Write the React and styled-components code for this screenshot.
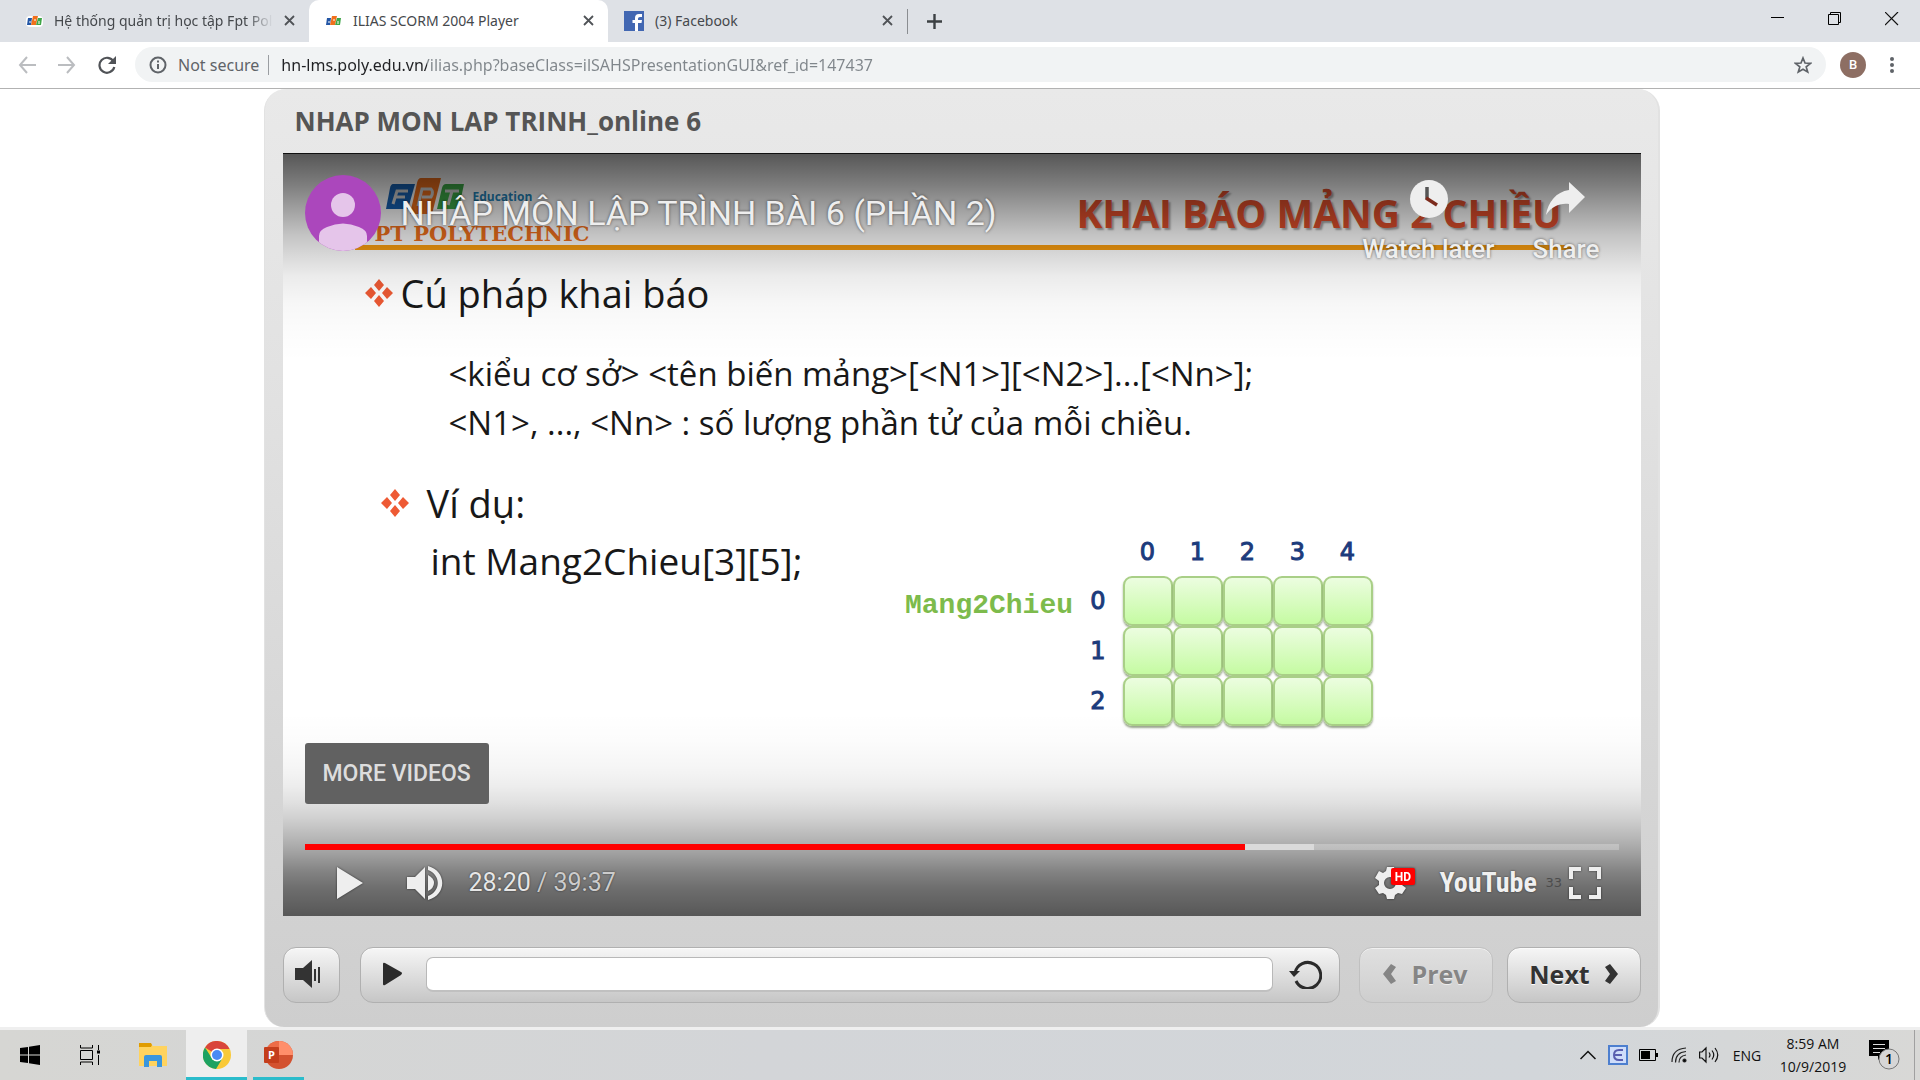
import React from "react";
import styled, { createGlobalStyle } from "styled-components";

const ui = '"Open Sans", "Noto Sans", sans-serif';
const system = '"Noto Sans", "Open Sans", sans-serif';
const yt = 'Roboto, "Liberation Sans", sans-serif';

const GlobalStyle = createGlobalStyle`
  *, *::before, *::after { box-sizing: border-box; }
  html, body { margin: 0; padding: 0; }
  body { background: #fff; font-family: ${ui}; color: #222; }
  button { font: inherit; color: inherit; border: 0; padding: 0; background: none; cursor: pointer; }
  svg { display: block; flex: none; }
`;

const Screen = styled.div`
  min-height: 100vh;
  display: flex;
  flex-direction: column;
`;

/* ---------- browser chrome ---------- */

const TabStrip = styled.header`
  display: flex;
  height: 42px;
  padding-left: 10px;
  background: #dee1e6;
  font-family: ${system};
`;

const Tab = styled.div`
  display: flex;
  align-items: center;
  width: 299px;
  padding: 0 14px 1px 16px;
  gap: 11px;
  color: #45484c;
  font-size: 14px;
  line-height: 20px;
  background: ${(p) => (p.$active ? "#fff" : "transparent")};
  border-radius: 10px 10px 0 0;
`;

const TabTitle = styled.span`
  flex: 1;
  min-width: 0;
  overflow: hidden;
  white-space: nowrap;
  mask-image: ${(p) => (p.$fade ? "linear-gradient(90deg, #000 88%, transparent)" : "none")};
`;

const TabDivider = styled.span`
  width: 1px;
  height: 25px;
  margin-top: 9px;
  background: #8a8d91;
`;

const NewTab = styled.button`
  display: flex;
  align-items: center;
  padding: 0 20px 0 19px;
`;

const WindowButtons = styled.div`
  display: flex;
  margin-left: auto;
`;

const WindowButton = styled.button`
  display: grid;
  place-items: center;
  width: 57px;
  height: 37px;
`;

const Toolbar = styled.nav`
  display: flex;
  align-items: center;
  height: 47px;
  padding: 0 18px 1px;
  border-bottom: 1px solid #b2b2b2;
  background: #fff;
`;

const NavButton = styled.button`
  display: grid;
  width: 40px;
`;

const Omnibox = styled.div`
  display: flex;
  flex: 1;
  align-items: center;
  height: 35px;
  margin: 0 14px 0 -3px;
  padding: 0 14px;
  border-radius: 18px;
  background: #f1f3f4;
  color: #5f6368;
  font: 16px/24px ${system};
`;

const Security = styled.span`
  padding: 0 9px 0 11px;
  white-space: nowrap;
`;

const SecurityDivider = styled.span`
  width: 1px;
  height: 20px;
  margin-right: 12px;
  background: #9a9da1;
`;

const Address = styled.input`
  flex: 1;
  min-width: 0;
  padding: 0;
  border: 0;
  outline: 0;
  font: 16px/24px ${system};
  color: #80868b;
  -webkit-text-fill-color: transparent;
  background: linear-gradient(90deg, #202124 146px, #80868b 146px);
  -webkit-background-clip: text;
  background-clip: text;
`;

const Profile = styled.button`
  display: grid;
  place-items: center;
  width: 26px;
  height: 26px;
  border-radius: 50%;
  background: #8d6e63;
  color: #fff;
  font: 500 13px/26px ${yt};
`;

const MenuButton = styled.button`
  display: grid;
  place-items: center;
  width: 20px;
  margin: 0 0 0 16px;
`;

/* ---------- course player ---------- */

const Page = styled.main`
  flex: 1;
  padding-left: 3px;
`;

const Player = styled.section`
  max-width: 1396px;
  margin: 0 auto;
  padding: 0 17px 24px 18px;
  border: solid #e2e2e2;
  border-width: 0 2px 0 1px;
  border-radius: 22px 22px 20px 20px;
  background: linear-gradient(#e9e9e9, #e2e2e2 30%, #cecece);
`;

const CourseTitle = styled.h1`
  margin: 0;
  padding: 12px;
  color: #555;
  font-size: 26px;
  line-height: 40px;
  font-weight: 700;
`;

const Video = styled.div`
  display: grid;
  border-top: 1px solid #111;
  background: #fff;
  min-height: 763px;
  > * { grid-area: 1 / 1; min-width: 0; }
`;

const Slide = styled.article`
  color: #181818;
`;

const SlideHeader = styled.header`
  display: flex;
  align-items: flex-end;
  justify-content: space-between;
  height: 96px;
  margin: 0 68px 0 72px;
  padding: 0 11px 0 5px;
  border-bottom: 5px solid #f99d10;
`;

const Brand = styled.div`
  display: flex;
  flex-direction: column;
  gap: 8px;
`;

const BrandTop = styled.div`
  display: flex;
  align-items: center;
  gap: 9px;
  padding-left: 26px;
  color: #2486bd;
  font-size: 12px;
  font-weight: 700;
`;

const BrandName = styled.div`
  color: #f0701c;
  font: 700 21px/22px "DejaVu Serif", serif;
`;

const SlideTitle = styled.h2`
  margin: 0;
  padding-bottom: 8px;
  color: #e04f2c;
  font-size: 39px;
  line-height: 48px;
  font-weight: 700;
  text-shadow: 2px 2px 2px rgba(0, 0, 0, 0.35);
`;

const Heading = styled.h3`
  display: flex;
  align-items: center;
  gap: ${(p) => p.$gap}px;
  margin: 0;
  font-size: 38px;
  line-height: 48px;
  font-weight: 400;
`;

const Intro = styled.div`
  padding: 19px 0 32px 82px;
`;

const Syntax = styled.p`
  margin: 0;
  padding-left: 166px;
  font-size: 33px;
  line-height: 49px;
`;

const Example = styled.div`
  display: flex;
  justify-content: space-between;
  padding: 32px 268px 0 98px;
`;

const Code = styled.p`
  margin: 10px 0 0 50px;
  font-size: 37px;
  line-height: 48px;
`;

const ArrayTable = styled.table`
  margin-top: 49px;
  border-collapse: collapse;
  color: #1c3b7c;
  font: 24px/28px "DejaVu Sans", sans-serif;
  -webkit-text-stroke: 1px currentColor;
  th, td { padding: 0; font-weight: 400; text-align: center; }
  thead th { height: 48px; }
  tbody th { width: 49px; }
`;

const ArrayName = styled.th`
  && {
    width: 169px;
    color: #7dbb4c;
    font: 700 28px/32px "Liberation Mono", monospace;
    -webkit-text-stroke: 0;
    padding-top: 10px;
  }
`;

const Cell = styled.td`
  width: 50px;
  height: 50px;
  > span {
    display: block;
    height: 50px;
    border: 2px solid #a9cf87;
    border-radius: 9px;
    background: linear-gradient(#ecfde0, #c5fba2);
    box-shadow: 0 2px 2px rgba(90, 110, 70, 0.6);
  }
`;

const Chrome = styled.div`
  display: flex;
  flex-direction: column;
  justify-content: space-between;
  color: #eee;
  font-family: ${yt};
  background:
    linear-gradient(
      rgba(0, 0, 0, 0.66) 0, rgba(0, 0, 0, 0.6) 12px, rgba(0, 0, 0, 0.5) 32px,
      rgba(0, 0, 0, 0.37) 56px, rgba(0, 0, 0, 0.24) 80px, rgba(0, 0, 0, 0.15) 102px,
      rgba(0, 0, 0, 0.08) 122px, rgba(0, 0, 0, 0.03) 150px, rgba(0, 0, 0, 0.01) 180px, transparent 208px
    ) top / 100% 208px no-repeat,
    linear-gradient(
      to top,
      rgba(0, 0, 0, 0.66) 0, rgba(0, 0, 0, 0.57) 28px, rgba(0, 0, 0, 0.49) 44px,
      rgba(0, 0, 0, 0.37) 63px, rgba(0, 0, 0, 0.29) 77px, rgba(0, 0, 0, 0.19) 97px,
      rgba(0, 0, 0, 0.12) 113px, rgba(0, 0, 0, 0.07) 130px, rgba(0, 0, 0, 0.04) 148px,
      rgba(0, 0, 0, 0.01) 176px, transparent 204px
    ) bottom / 100% 204px no-repeat;
`;

const TopBar = styled.div`
  display: flex;
  gap: 20px;
  padding: 21px 41px 0 22px;
`;

const VideoTitle = styled.a`
  flex: 1;
  padding-top: 14px;
  color: #eee;
  font-size: 34px;
  line-height: 48px;
  text-decoration: none;
  white-space: nowrap;
  text-shadow: 0 0 3px rgba(0, 0, 0, 0.6);
`;

const Actions = styled.div`
  display: flex;
  align-items: flex-start;
  gap: 38px;
  padding-top: 4px;
`;

const Action = styled.button`
  && {
    display: flex;
    flex-direction: column;
    align-items: center;
    gap: 19px;
    font-size: 26px;
    line-height: 24px;
    font-weight: 500;
    text-shadow: 0 0 3px rgba(0, 0, 0, 0.6);
  }
`;

const MoreVideos = styled.button`
  && {
    height: 61px;
    margin: 0 22px 40px;
    padding: 0 18px;
    border-radius: 3px;
    background: #616161;
    color: #ddd;
    font-size: 23px;
    font-weight: 500;
  }
`;

const Scrubber = styled.input`
  display: block;
  appearance: none;
  width: calc(100% - 44px);
  height: 6px;
  margin: 0 22px;
  border: 0;
  background: linear-gradient(90deg, #f00 71.5%, #dadada 71.5%, #dadada 76.8%, rgba(255, 255, 255, 0.25) 76.8%);
  &::-webkit-slider-thumb { appearance: none; width: 0; height: 0; }
`;

const VideoControls = styled.div`
  display: flex;
  align-items: center;
  height: 66px;
  padding: 0 40px 0 54px;
`;

const Time = styled.div`
  flex: 1;
  margin-left: 26px;
  color: #ccc;
  font-size: 25px;
  line-height: 28px;
  text-shadow: 0 0 2px rgba(0, 0, 0, 0.6);
  b { color: #e6e6e6; font-weight: 400; }
`;

const IconButton = styled.button`
  margin-left: ${(p) => p.$gap || 0}px;
  filter: ${(p) => (p.$flat ? "none" : "drop-shadow(0 0 1px rgba(0, 0, 0, 0.6))")};
`;

const YouTubeLink = styled.a`
  margin-left: 25px;
  width: 98px;
  color: #f0f0f0;
  font: 700 28px/32px "Roboto Condensed", "Liberation Sans Narrow", "Liberation Sans", sans-serif;
  text-decoration: none;
  text-shadow: 0 0 2px rgba(0, 0, 0, 0.6);
`;

const PageNumber = styled.span`
  margin-left: 8px;
  width: 16px;
  color: #4c4c4c;
  font: 13px/16px "DejaVu Sans", sans-serif;
`;

const Controls = styled.div`
  display: flex;
  align-items: center;
  padding-top: 31px;
`;

const raised = `
  display: flex;
  align-items: center;
  height: 56px;
  border: 1px solid #b0b0b0;
  border-radius: 13px;
  background: linear-gradient(#f6f6f6, #c6c6c6);
  box-shadow: inset 0 1px #fff8;
`;

const SquareButton = styled.button`
  && { ${raised} width: 57px; padding: 0 0 2px 11px; }
`;

const SeekPanel = styled.div`
  ${raised}
  flex: 1;
  margin: 0 19px 0 20px;
  padding: 0 17px 2px 21px;
`;

const Seek = styled.input`
  appearance: none;
  flex: 1;
  min-width: 0;
  height: 35px;
  margin: 0 16px 0 23px;
  border: 1px solid #b8b8b8;
  border-bottom: 2px solid #c0c0c0;
  border-radius: 7px;
  background: #fff;
  &::-webkit-slider-thumb { appearance: none; width: 0; height: 0; }
`;

const StepButton = styled.button`
  && {
    ${raised}
    justify-content: center;
    gap: 15px;
    width: 134px;
    padding-bottom: 3px;
    margin-right: ${(p) => p.$gap || 0}px;
    color: #333;
    font-size: 25px;
    line-height: 32px;
    font-weight: 700;
    text-shadow: 0 1px #fff;
  }
  &&:disabled {
    color: #858585;
    border-color: #c0c0c0;
    background: linear-gradient(#e0e0e0, #cecece);
    text-shadow: 0 1px #eee;
  }
`;

/* ---------- taskbar ---------- */

const Taskbar = styled.footer`
  display: flex;
  align-items: stretch;
  height: 53px;
  border-top: 3px solid #efefef;
  background: linear-gradient(90deg, #d6d6d3, #d3d5d8 40%, #d2d6da 80%, #d8d8d6);
`;

const TaskButton = styled.button`
  && {
    display: grid;
    place-items: center;
    width: ${(p) => p.$w || 60}px;
    margin-left: ${(p) => p.$ml || 0}px;
    background: ${(p) => (p.$active ? "#eeeeee" : "transparent")};
    border: solid ${(p) => (p.$running ? "#2bbccb" : "transparent")};
    border-width: ${(p) => (p.$running ? "3px 0 3px" : "0")};
    border-top-color: transparent;
  }
`;

const Tray = styled.div`
  display: flex;
  align-items: center;
  margin-left: auto;
  color: #111;
  font-size: 14px;
`;

const Language = styled.button`
  && { margin-left: 12px; width: 30px; font-size: 14px; }
`;

const Clock = styled.div`
  width: 72px;
  margin-left: 15px;
  font-size: 14px;
  line-height: 23px;
  text-align: center;
`;

const Notices = styled.button`
  margin-left: 20px;
`;

const ShowDesktop = styled.button`
  && { align-self: stretch; width: 6px; margin-left: 14px; border-left: 1px solid #a0a0a0; }
`;

/* ---------- drawings ---------- */

const Favicon = () => (
  <svg width="17" height="12" viewBox="0 0 17 12">
    <rect x="0" y="1" width="17" height="11" rx="4" fill="#fff" />
    <path d="M2 3h4L5 10H1z" fill="#2356a5" />
    <path d="M7 1h5l-2 9H5z" fill="#f0701c" />
    <path d="M12 3h4l-1 7h-5z" fill="#3fa648" />
    <path d="M3 7h2M8 5h2M13 6v3" stroke="#fff" strokeWidth="1" />
  </svg>
);

const Cross = () => (
  <svg width="11" height="11" viewBox="0 0 11 11">
    <path d="M1 1l9 9M10 1l-9 9" stroke="#505357" strokeWidth="1.8" />
  </svg>
);

const FptLogo = () => (
  <svg width="78" height="37" viewBox="0 0 78 37">
    <path d="M7 6h22l-7 25H0L4 10q1-4 3-4z" fill="#1763b5" />
    <path d="M35 0h20l-9 36H24l7-31q1-5 4-5z" fill="#f0701c" />
    <path d="M60 6h18l-4 19q-1 6-5 6H51l5-21q1-4 4-4z" fill="#3fae49" />
    <g fill="none" stroke="#d5d5d5" strokeWidth="3">
      <path d="M7 26l4-13h11M9 19h10" />
      <path d="M32 28l4-17h9q3 3 0 8h-9" />
      <path d="M59 13h14M66 13l-4 14" />
    </g>
  </svg>
);

const Bullet = () => (
  <svg width="28" height="28" viewBox="0 0 28 28" fill="#ee5a34">
    <path d="M14 0l5 6-5 6-5-6zM14 16l5 6-5 6-5-6zM6 8l5 6-5 6-6-6zM22 8l6 6-6 6-5-6z" />
  </svg>
);

const Avatar = () => (
  <svg width="76" height="76" viewBox="0 0 76 76">
    <defs><clipPath id="round"><circle cx="38" cy="38" r="38" /></clipPath></defs>
    <g clipPath="url(#round)">
      <rect width="76" height="76" fill="#ab47bc" />
      <circle cx="38" cy="30" r="12" fill="#e5c5ea" />
      <path d="M14 76V61q0-6 8-9 16-7 32 0 8 3 8 9v15z" fill="#e5c5ea" />
    </g>
  </svg>
);

const ClockIcon = () => (
  <svg width="39" height="39" viewBox="0 0 39 39">
    <circle cx="20" cy="20" r="19" fill="#eee" />
    <path d="M18 8v12" fill="none" stroke="#555" strokeWidth="3.5" />
    <path d="M17 19l11 7" fill="none" stroke="#7c2b1c" strokeWidth="3.5" />
  </svg>
);

const ShareIcon = () => (
  <svg width="39" height="39" viewBox="0 0 39 39">
    <path d="M23 3l16 15-16 16v-9C14 24 6 27 0 36 2 23 10 13 23 11z" fill="#eee" />
  </svg>
);

const PlayIcon = () => (
  <svg width="26" height="32" viewBox="0 0 26 32"><path d="M0 0l26 16L0 32z" fill="#eee" /></svg>
);

const VolumeIcon = () => (
  <svg width="36" height="34" viewBox="0 0 36 34" fill="#eee">
    <path d="M0 11h8L18 1v32L8 23H0z" />
    <path d="M21 9q6 3 6 8t-6 8z" />
    <path d="M21 0c19 5 19 29 0 34v-4c13-5 13-21 0-26z" />
  </svg>
);

const GearIcon = () => (
  <svg width="40" height="34" viewBox="0 0 40 34">
    <path
      fill="#eee"
      fillRule="evenodd"
      d="M12 1h7l1 4 3 2 4-2 4 7-4 3v4l4 3-4 6-4-1-3 2-1 4h-7l-1-4-3-2-4 1-4-6 4-3v-4l-4-3 4-7 4 2 3-2zM15 11a6 6 0 1 0 0 12 6 6 0 0 0 0-12z"
    />
    <rect x="16" y="2" width="24" height="17" rx="2" fill="#f00" />
    <text x="28" y="15" textAnchor="middle" fontFamily="Roboto, sans-serif" fontSize="12" fontWeight="700" fill="#fff">HD</text>
  </svg>
);

const FullIcon = () => (
  <svg width="32" height="32" viewBox="0 0 32 32" fill="none" stroke="#eee" strokeWidth="4">
    <path d="M2 12V2h10M20 2h10v10M30 20v10H20M12 30H2V20" />
  </svg>
);

const SpeakerIcon = () => (
  <svg width="26" height="30" viewBox="0 0 26 30" fill="#333">
    <path d="M0 9h8l9-8v28l-9-8H0zM19 10h2v12h-2zM23 8h2v16h-2z" />
  </svg>
);

const SmallPlay = () => (
  <svg width="21" height="24" viewBox="0 0 21 24"><path d="M1 2q0-2 2-1l16 9q2 1 0 3L3 23q-2 1-2-1z" fill="#2b2b2b" /></svg>
);

const ReplayIcon = () => (
  <svg width="33" height="30" viewBox="0 0 33 30">
    <path d="M6 14A13 13 0 1 1 7 22" fill="none" stroke="#2b2b2b" strokeWidth="3" />
    <path d="M0 12h11l-6 6z" fill="#2b2b2b" />
  </svg>
);

const Chevron = ({ left }) => (
  <svg width="13" height="20" viewBox="0 0 13 20" fill="currentColor">
    {left ? <path d="M8 0l5 3-5 7 5 7-5 3-8-10z" /> : <path d="M5 0L0 3l5 7-5 7 5 3 8-10z" />}
  </svg>
);

export default function App() {
  const columns = [0, 1, 2, 3, 4];
  const rows = [0, 1, 2];
  return (
    <Screen>
      <GlobalStyle />
      <TabStrip>
        <Tab>
          <Favicon />
          <TabTitle $fade>Hệ thống quản trị học tập Fpt Pol</TabTitle>
          <button aria-label="Close tab"><Cross /></button>
        </Tab>
        <Tab $active>
          <Favicon />
          <TabTitle>ILIAS SCORM 2004 Player</TabTitle>
          <button aria-label="Close tab"><Cross /></button>
        </Tab>
        <Tab>
          <svg width="20" height="20" viewBox="0 0 20 20">
            <rect width="20" height="20" fill="#4267b2" />
            <path d="M11 20v-8H8.500V9H11V7q0-4 4-4h3v3h-2q-2 0-2 1.500V9h4l-.5 3H14v8z" fill="#fff" />
          </svg>
          <TabTitle>(3) Facebook</TabTitle>
          <button aria-label="Close tab"><Cross /></button>
        </Tab>
        <TabDivider />
        <NewTab aria-label="New tab">
          <svg width="15" height="15" viewBox="0 0 15 15"><path d="M7.500 0v15M0 7.500h15" stroke="#3c4043" strokeWidth="2.400" /></svg>
        </NewTab>
        <WindowButtons>
          <WindowButton aria-label="Minimize">
            <svg width="14" height="14" viewBox="0 0 14 14"><path d="M0 5.500h13" stroke="#000" /></svg>
          </WindowButton>
          <WindowButton aria-label="Restore">
            <svg width="14" height="14" viewBox="0 0 14 14" fill="none" stroke="#000"><path d="M.5 2.500h10v10H.5zM2.500 2.500v-2h10v10h-2" /></svg>
          </WindowButton>
          <WindowButton aria-label="Close">
            <svg width="14" height="14" viewBox="0 0 14 14"><path d="M0 0l13 13M13 0L0 13" stroke="#111" strokeWidth="1.200" /></svg>
          </WindowButton>
        </WindowButtons>
      </TabStrip>

      <Toolbar>
        <NavButton aria-label="Back">
          <svg width="18" height="18" viewBox="0 0 18 18" fill="none" stroke="#bbbdc0" strokeWidth="2"><path d="M18 9H2M9 1L2 9l7 8" /></svg>
        </NavButton>
        <NavButton aria-label="Forward">
          <svg width="18" height="18" viewBox="0 0 18 18" fill="none" stroke="#bbbdc0" strokeWidth="2"><path d="M0 9h16M9 1l7 8-7 8" /></svg>
        </NavButton>
        <NavButton aria-label="Reload">
          <svg width="18" height="18" viewBox="0 0 18 18">
            <path d="M15.500 5.500A7.500 7.500 0 1 0 16.300 11" fill="none" stroke="#505357" strokeWidth="2.200" />
            <path d="M18 0v8h-8z" fill="#505357" />
          </svg>
        </NavButton>
        <Omnibox>
          <svg width="18" height="18" viewBox="0 0 18 18" fill="none" stroke="#5f6368" strokeWidth="2"><circle cx="9" cy="9" r="7.500" /><path d="M9 8v5M9 4.500v2" /></svg>
          <Security>Not secure</Security>
          <SecurityDivider />
          <Address
            aria-label="Address"
            defaultValue="hn-lms.poly.edu.vn/ilias.php?baseClass=ilSAHSPresentationGUI&ref_id=147437"
          />
          <button aria-label="Bookmark">
            <svg width="18" height="18" viewBox="0 0 18 18"><path d="M9 2l2 5 5.500.3-4.300 3.600L13.700 16 9 13.200 4.300 16l1.500-5.100L1.500 7.300 7 7z" fill="none" stroke="#5f6368" strokeWidth="1.700" /></svg>
          </button>
        </Omnibox>
        <Profile>B</Profile>
        <MenuButton aria-label="Menu">
          <svg width="4" height="18" viewBox="0 0 4 18" fill="#5f6368"><circle cx="2" cy="3" r="2" /><circle cx="2" cy="9" r="2" /><circle cx="2" cy="15" r="2" /></svg>
        </MenuButton>
      </Toolbar>

      <Page>
        <Player>
          <CourseTitle>NHAP MON LAP TRINH_online 6</CourseTitle>
          <Video>
            <Slide>
              <SlideHeader>
                <Brand>
                  <BrandTop><FptLogo />Education</BrandTop>
                  <BrandName>FPT POLYTECHNIC</BrandName>
                </Brand>
                <SlideTitle>KHAI BÁO MẢNG 2 CHIỀU</SlideTitle>
              </SlideHeader>
              <Intro>
                <Heading $gap={8}><Bullet />Cú pháp khai báo</Heading>
              </Intro>
              <Syntax>{"<kiểu cơ sở> <tên biến mảng>[<N1>][<N2>]...[<Nn>];"}</Syntax>
              <Syntax>{"<N1>, ..., <Nn> : số lượng phần tử của mỗi chiều."}</Syntax>
              <Example>
                <div>
                  <Heading $gap={18}><Bullet />Ví dụ:</Heading>
                  <Code>int Mang2Chieu[3][5];</Code>
                </div>
                <ArrayTable>
                  <thead>
                    <tr>
                      <td colSpan={2} />
                      {columns.map((c) => <th key={c} scope="col">{c}</th>)}
                    </tr>
                  </thead>
                  <tbody>
                    {rows.map((r) => (
                      <tr key={r}>
                        {r === 0 ? <ArrayName>Mang2Chieu</ArrayName> : <td />}
                        <th scope="row">{r}</th>
                        {columns.map((c) => <Cell key={c}><span /></Cell>)}
                      </tr>
                    ))}
                  </tbody>
                </ArrayTable>
              </Example>
            </Slide>
            <Chrome>
              <TopBar>
                <Avatar />
                <VideoTitle href="#video">NHẬP MÔN LẬP TRÌNH BÀI 6 (PHẦN 2)</VideoTitle>
                <Actions>
                  <Action><ClockIcon />Watch later</Action>
                  <Action><ShareIcon />Share</Action>
                </Actions>
              </TopBar>
              <div>
                <MoreVideos>MORE VIDEOS</MoreVideos>
                <Scrubber type="range" aria-label="Video position" min="0" max="2377" defaultValue="1700" />
                <VideoControls>
                  <IconButton aria-label="Play"><PlayIcon /></IconButton>
                  <IconButton aria-label="Mute" $gap={44}><VolumeIcon /></IconButton>
                  <Time><b>28:20</b> / 39:37</Time>
                  <IconButton aria-label="Settings"><GearIcon /></IconButton>
                  <YouTubeLink href="#youtube">YouTube</YouTubeLink>
                  <PageNumber>33</PageNumber>
                  <IconButton aria-label="Full screen" $gap={7}><FullIcon /></IconButton>
                </VideoControls>
              </div>
            </Chrome>
          </Video>
          <Controls>
            <SquareButton aria-label="Volume"><SpeakerIcon /></SquareButton>
            <SeekPanel>
              <IconButton $flat aria-label="Play slide"><SmallPlay /></IconButton>
              <Seek type="range" aria-label="Slide position" defaultValue="0" />
              <IconButton $flat aria-label="Replay"><ReplayIcon /></IconButton>
            </SeekPanel>
            <StepButton disabled $gap={14}><Chevron left />Prev</StepButton>
            <StepButton>Next<Chevron /></StepButton>
          </Controls>
        </Player>
      </Page>

      <Taskbar>
        <TaskButton aria-label="Start">
          <svg width="20" height="20" viewBox="0 0 20 20"><path d="M0 3l8-1v7.500H0zM9 1.800L20 0v9.500H9zM0 10.500h8V18l-8-1zM9 10.500h11V20L9 18.200z" /></svg>
        </TaskButton>
        <TaskButton aria-label="Task view">
          <svg width="20" height="20" viewBox="0 0 20 20" fill="none" stroke="#000"><path d="M.5 5.500h12v9H.5zM.5 0v3h12V0M.5 20v-3h12v3M18.500 0v5M18.500 10v10" /><path d="M17 5.500h3v3h-3z" fill="#000" stroke="none" /></svg>
        </TaskButton>
        <TaskButton aria-label="File Explorer" $w={66}>
          <svg width="28" height="24" viewBox="0 0 28 24">
            <path d="M0 1h12l2 2h14v20H0z" fill="#ffd35e" /><path d="M0 0h12l1 2-1 2H0z" fill="#e09c00" />
            <path d="M5 24V14q0-2 2-2h14q2 0 2 2v10h-5v-6h-8v6z" fill="#3a96dd" />
          </svg>
        </TaskButton>
        <TaskButton aria-label="Chrome" $w={61} $active $running>
          <svg width="28" height="28" viewBox="0 0 28 28">
            <circle cx="14" cy="14" r="14" fill="#f9c937" />
            <path d="M14 14L2 6.500A14 14 0 0 1 26.500 8H14z" fill="#d9453a" />
            <path d="M2 6.500A14 14 0 0 0 13 28l6-10-9 1z" fill="#1da261" />
            <circle cx="14" cy="14" r="6.500" fill="#fff" /><circle cx="14" cy="14" r="5" fill="#4a8af4" />
          </svg>
        </TaskButton>
        <TaskButton aria-label="PowerPoint" $w={51} $ml={6} $running>
          <svg width="29" height="28" viewBox="0 0 29 28">
            <circle cx="15" cy="14" r="14" fill="#d35230" /><path d="M15 0a14 14 0 0 1 14 14H15z" fill="#ff8f6b" /><path d="M15 0v14H1A14 14 0 0 1 15 0z" fill="#ed6c47" />
            <rect y="6" width="15" height="16" rx="1" fill="#c43e1c" />
            <text x="7.500" y="18" textAnchor="middle" fontFamily="Open Sans, sans-serif" fontWeight="700" fontSize="11" fill="#fff">P</text>
          </svg>
        </TaskButton>
        <Tray>
          <svg width="16" height="10" viewBox="0 0 16 10" fill="none" stroke="#111" strokeWidth="1.500"><path d="M.5 9L8 1.500 15.500 9" /></svg>
          <svg width="32" height="20" viewBox="-12 0 32 20">
            <rect width="20" height="20" fill="#4d7fcf" /><rect x="2" y="2" width="16" height="16" fill="#cfddfa" />
            <path d="M15 5h-4q-5 0-5 5t5 5h4M6 10h8" fill="none" stroke="#5a5fb0" strokeWidth="2" />
          </svg>
          <svg width="30" height="12" viewBox="-11 0 30 12"><path d="M.5.5h16v11H.5z" fill="none" stroke="#000" /><path d="M2 2h9v8H2zM17 4h2v4h-2z" /></svg>
          <svg width="29" height="16" viewBox="-13 0 29 16" fill="none" stroke="#222" strokeWidth="1.200">
            <path d="M1 15Q1 2 15 1M4.500 15.500Q4.500 5.500 15 4.500M8 15.500Q8 9 15 8" /><circle cx="13.500" cy="13.500" r="1.500" fill="#000" />
          </svg>
          <svg width="33" height="18" viewBox="-12 0 33 18" fill="none" stroke="#111" strokeWidth="1.200"><path d="M.6 6v6H3l4 4V2L3 6zM10 6.500q2 2.500 0 5M13 4.500q3.500 4.500 0 9M16 2q5.500 7 0 14" /></svg>
          <Language>ENG</Language>
          <Clock>8:59 AM<br />10/9/2019</Clock>
          <Notices aria-label="Notifications">
            <svg width="31" height="32" viewBox="0 0 31 32">
              <path d="M0 1h20v16h-7l-4 4v-4H0z" fill="#000" /><path d="M4 5.500h12M4 9.500h12M4 13.500h7" stroke="#ddd" strokeWidth="1.200" />
              <circle cx="20" cy="20" r="10" fill="#d6d6d6" stroke="#777" />
              <text x="20" y="25" textAnchor="middle" fontFamily="Open Sans, sans-serif" fontWeight="600" fontSize="14">1</text>
            </svg>
          </Notices>
          <ShowDesktop aria-label="Show desktop" />
        </Tray>
      </Taskbar>
    </Screen>
  );
}
